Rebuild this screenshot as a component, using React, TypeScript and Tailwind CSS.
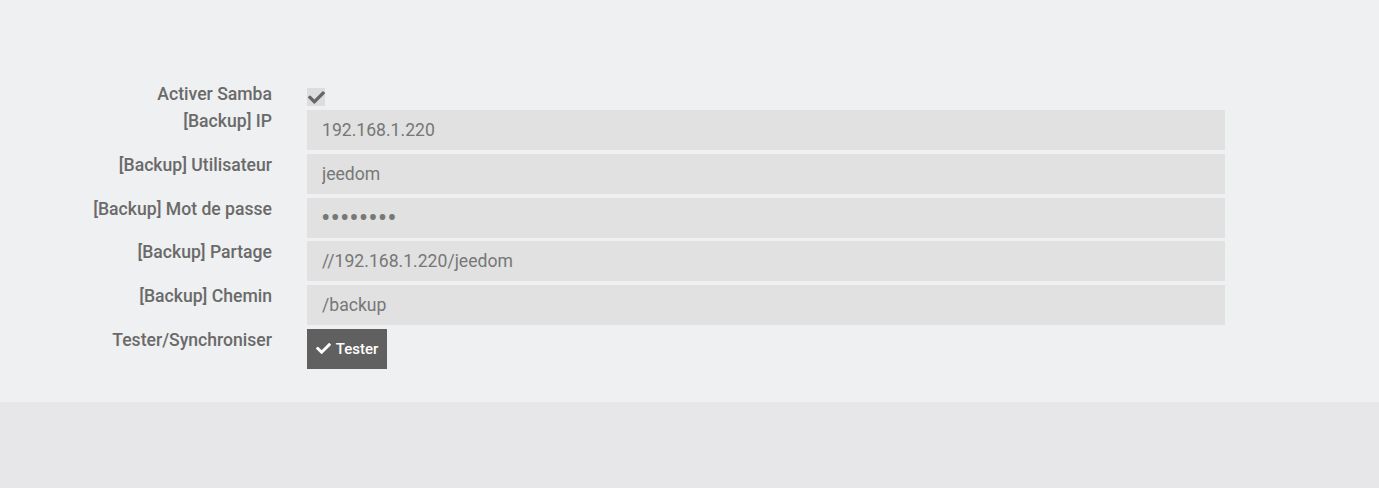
import { FaCheck } from "react-icons/fa"

const fields = [
  { label: "[Backup] IP", value: "192.168.1.220" },
  { label: "[Backup] Utilisateur", value: "jeedom" },
  { label: "[Backup] Mot de passe", value: "••••••••", password: true },
  { label: "[Backup] Partage", value: "//192.168.1.220/jeedom" },
  { label: "[Backup] Chemin", value: "/backup" },
]

function Label({ children }: { children: React.ReactNode }) {
  return (
    <label className="w-[272px] shrink-0 pt-[1px] text-right text-[17.6px] leading-[20px] font-medium text-[#6a6a6a]">
      {children}
    </label>
  )
}

export default function App() {
  return (
    <div className="min-h-[488px] bg-[#e7e7e9] font-['Roboto',sans-serif]">
      {/* Samba settings panel */}
      <div className="h-[402px] bg-[#eff0f1] pt-[83px]">
        <div className="flex h-[27px] items-start">
          <Label>Activer Samba</Label>
          <div className="ml-[35px] mt-[5px] flex h-[18px] w-[18px] items-center justify-center bg-[#dcdddc]">
            <FaCheck className="h-[17px] w-[17px] text-[#666]" />
          </div>
        </div>

        {fields.map((f) => (
          <div key={f.label} className="mb-[3.75px] flex items-start">
            <Label>{f.label}</Label>
            <input
              readOnly
              type="text"
              defaultValue={f.value}
              className={
                f.password
                  ? "ml-[35px] h-[40px] w-[918px] bg-[#e0e1e0] px-[14px] text-[28px] tracking-[0px] text-[#777] outline-none"
                  : "ml-[35px] h-[40px] w-[918px] bg-[#e0e1e0] px-[15px] text-[17.6px] text-[#777] outline-none"
              }
            />
          </div>
        ))}

        <div className="flex items-start">
          <Label>Tester/Synchroniser</Label>
          <button className="ml-[35px] flex h-[40px] w-[80px] items-center justify-center gap-[5px] bg-[#606060] text-[15px] font-medium text-white">
            <FaCheck className="h-[15px] w-[15px]" />
            Tester
          </button>
        </div>
      </div>
    </div>
  )
}
